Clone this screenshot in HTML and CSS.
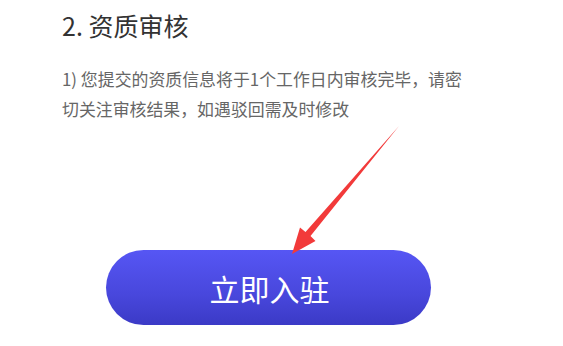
FILE: index.html
```html
<!DOCTYPE html>
<html lang="zh">
<head>
<meta charset="utf-8">
<link rel="stylesheet" href="styles.css">
</head>
<body>
<div class="page">
  <h2 class="title">2. 资质审核</h2>
  <p class="desc">1) 您提交的资质信息将于1个工作日内审核完毕，请密<br>切关注审核结果，如遇驳回需及时修改</p>
  <div class="btn-row">
    <button class="btn">立即入驻</button>
  </div>
  <svg class="arrow" width="563" height="346" viewBox="0 0 563 346">
    <polygon points="399,126 310.5,236 315.5,241 292,254 300,227.5 305.5,232" fill="#f23a3a"/>
  </svg>
</div>
</body>
</html>
```
FILE: styles.css
```css
html, body {
  margin: 0;
  padding: 0;
  background: #ffffff;
}
.page {
  position: relative;
  width: 563px;
  height: 346px;
  overflow: hidden;
  font-family: "Noto Sans CJK SC", "Noto Sans", sans-serif;
}
.title {
  margin: 0;
  padding: 8px 0 0 62px;
  font-size: 25px;
  font-weight: 400;
  line-height: 34px;
  color: #333333;
}
.desc {
  margin: 22px 0 0 62px;
  font-size: 16.9px;
  line-height: 30px;
  color: #666666;
}
.btn-row {
  padding: 0 0 0 106px;
  margin-top: 126px;
}
.btn {
  display: flex;
  align-items: center;
  justify-content: center;
  width: 325px;
  height: 75px;
  border: none;
  border-radius: 38px;
  background: linear-gradient(180deg, #5656f4 0%, #4847dc 60%, #3b3ac6 100%);
  color: #ffffff;
  font-family: "Noto Sans CJK SC", sans-serif;
  font-size: 30px;
  font-weight: 400;
  padding: 0 0 0 2px;
}
.arrow {
  position: absolute;
  left: 0;
  top: 0;
  pointer-events: none;
}
```
